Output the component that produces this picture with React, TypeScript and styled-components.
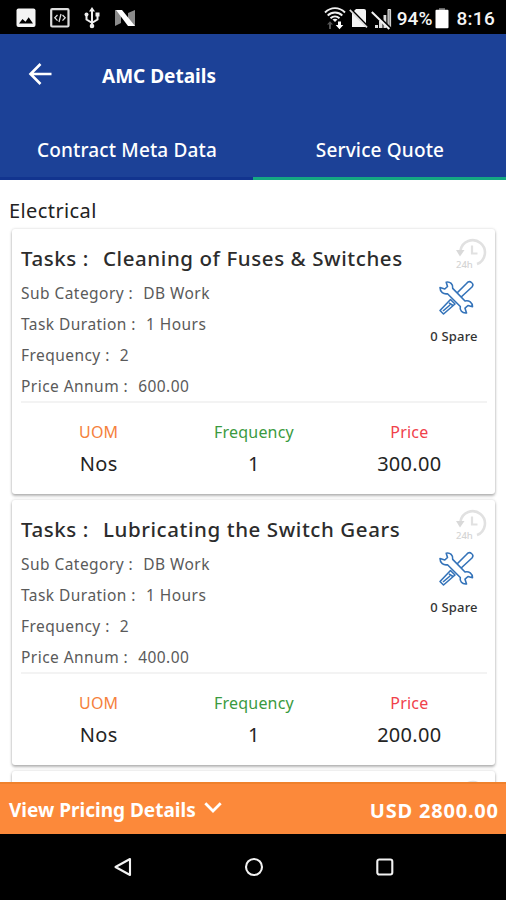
import React from 'react';
import styled, { createGlobalStyle } from 'styled-components';

const Global = createGlobalStyle`
  * { box-sizing: border-box; }
  body { margin: 0; background: #fff; font-family: "Noto Sans", "Open Sans", sans-serif; }
  svg { display: block; flex: none; }
`;

const Screen = styled.div`
  display: flex;
  flex-direction: column;
  width: 506px;
  height: 900px;
  overflow: hidden;
  background: #fff;
`;

const StatusBar = styled.div`
  display: flex;
  align-items: center;
  justify-content: space-between;
  flex: none;
  height: 34px;
  padding: 2px 11px 0 16px;
  background: #000;
  color: #f4f4f4;
`;

const StatusGroup = styled.div<{ $gap: number }>`
  display: flex;
  align-items: center;
  gap: ${(p) => p.$gap}px;
`;

const StatusText = styled.span<{ $spacing: number; $push: number }>`
  font: 500 19px/24px Roboto, sans-serif;
  letter-spacing: ${(p) => p.$spacing}px;
  margin: 2px 0 0 ${(p) => p.$push}px;
`;

const Header = styled.header`
  flex: none;
  height: 146px;
  background: #1c4197;
  color: #fff;
`;

const TitleBar = styled.div`
  display: flex;
  align-items: center;
  gap: 49px;
  height: 84px;
  padding: 0 0 4px 27px;
`;

const Title = styled.h1`
  margin: 4px 0 0;
  font-size: 19px;
  line-height: 26px;
  font-weight: 700;
`;

const Tabs = styled.nav`
  display: grid;
  grid-template-columns: 1fr 1fr;
  height: 62px;
`;

const Tab = styled.div<{ $active?: boolean }>`
  display: flex;
  align-items: center;
  justify-content: center;
  font-size: 19px;
  font-weight: 500;
  letter-spacing: 0.15px;
  border-bottom: 3px solid ${(p) => (p.$active ? '#14a882' : '#12348f')};
  padding: 4px 0 0 1px;
`;

const Content = styled.main`
  flex: 1;
  min-height: 0;
  overflow: hidden;
  padding: 17px 11px 0 12px;
`;

const Section = styled.h2`
  margin: 0 0 5px -3px;
  font-size: 20px;
  line-height: 27px;
  font-weight: 400;
  letter-spacing: 0.4px;
  color: #222;
`;

const Card = styled.article`
  display: flex;
  flex-direction: column;
  height: 265px;
  margin-bottom: 6px;
  padding: 13px 8px 0 9px;
  border-radius: 3px;
  background: #fff;
  box-shadow: 0 2px 3px rgba(0, 0, 0, 0.27), 0 0 3px rgba(0, 0, 0, 0.16);
`;

const CardTop = styled.div`
  display: flex;
  justify-content: space-between;
  height: 161px;
  border-bottom: 2px solid #f3f3f3;
`;

const Details = styled.div`
  display: flex;
  flex-direction: column;
`;

const TaskName = styled.h3`
  display: flex;
  gap: 14px;
  margin: 0 0 4px;
  font-size: 20.5px;
  line-height: 32px;
  font-weight: 500;
  letter-spacing: 0.58px;
  color: #2c2c2c;
  white-space: nowrap;
`;

const Detail = styled.div`
  display: flex;
  gap: 10px;
  font-size: 15.5px;
  line-height: 31px;
  letter-spacing: 0.45px;
  color: #5a5a5a;
  white-space: nowrap;
`;

const Side = styled.div`
  display: flex;
  flex-direction: column;
  align-items: center;
  width: 66px;
  margin-top: -4px;
`;

const HistorySlot = styled.div`
  align-self: flex-end;
  margin-bottom: 10px;
`;

const ToolsSlot = styled.div`
  margin-left: 4px;
`;

const Spare = styled.span`
  margin-top: 11px;
  font-size: 13px;
  line-height: 18px;
  font-weight: 500;
  letter-spacing: 0.2px;
  color: #333;
  white-space: nowrap;
`;

const Figures = styled.div`
  display: grid;
  grid-template-columns: repeat(3, 1fr);
  padding-top: 14px;
  text-align: center;
`;

const FigureLabel = styled.div<{ $color: string }>`
  font-size: 16px;
  line-height: 30px;
  letter-spacing: 0.2px;
  color: ${(p) => p.$color};
`;

const FigureValue = styled.div`
  font-size: 20px;
  line-height: 34px;
  letter-spacing: 0.3px;
  color: #242424;
`;

const PricingBar = styled.footer`
  display: flex;
  align-items: center;
  justify-content: space-between;
  flex: none;
  height: 52px;
  padding: 2px 8px 0 9px;
  border-top: 2px solid #ef812c;
  background: #fc893a;
  color: #fff;
  font-weight: 700;
  font-size: 19px;
`;

const PricingToggle = styled.div`
  display: flex;
  align-items: center;
  gap: 8px;
`;

const ChevronSlot = styled.span`
  margin-top: -4px;
`;

const Total = styled.span`
  font-size: 20px;
  letter-spacing: 0.8px;
  margin-right: -0.8px;
`;

const NavBar = styled.div`
  display: flex;
  align-items: center;
  justify-content: center;
  gap: 111px;
  flex: none;
  height: 66px;
  padding-left: 1px;
  background: #000;
`;

const ImageIcon = () => (
  <svg width="20" height="20" viewBox="0 0 20 20">
    <rect x="0.5" y="0.5" width="19" height="18.5" rx="2" fill="#f4f4f4" />
    <path d="M3 15.5 6.5 11l3 2.7 3.2-4.5 4.3 6.3z" fill="#000" />
  </svg>
);

const CodeIcon = () => (
  <svg width="20" height="20" viewBox="0 0 20 20" fill="none" stroke="#ddd">
    <rect x="1.2" y="1.2" width="17.3" height="17.3" rx="1" strokeWidth="2.2" />
    <path d="M7.5 7 4.8 9.8l2.7 2.8M12.5 7l2.7 2.8-2.7 2.8M11 6l-2 8" strokeWidth="1.3" />
  </svg>
);

const UsbIcon = () => (
  <svg width="16" height="22" viewBox="0 0 16 22" fill="none" stroke="#eee" strokeWidth="2">
    <path d="M8 3v15M2.5 8v4.5L8 15.8l5.5-3.3V8" />
    <path d="M8 0 11 4.5H5z" fill="#eee" stroke="none" />
    <circle cx="8" cy="19" r="2.3" fill="#eee" stroke="none" />
    <circle cx="2.5" cy="7.5" r="2" fill="#eee" stroke="none" />
    <path d="M11.5 5.5h4v4h-4z" fill="#eee" stroke="none" />
  </svg>
);

const NIcon = () => (
  <svg width="22" height="18" viewBox="0 0 22 18">
    <path d="M1 1h6v13l-6 3zM14 4l7-3v16h-7z" fill="#8b8b8b" />
    <path d="M2 1h6l13 16h-7z" fill="#fff" />
  </svg>
);

const WifiIcon = () => (
  <svg width="22" height="24" viewBox="0 0 22 24" fill="none" stroke="#f0f0f0">
    <path d="M1 6.500C7 .7 15 .7 21 6.500M3.700 9.500c4.200-4 10.400-4 14.600 0M6.500 12.300c2.700-2.500 6.300-2.500 9 0" strokeWidth="1.900" />
    <path d="m8.500 13.500 2.500 2.500 2.500-2.500c-1.500-1-3.500-1-5 0z" fill="#f0f0f0" stroke="none" />
    <path d="M6 15.200 9 18.500H7V23H5v-4.500H3z" fill="#555" stroke="none" />
    <path d="M14 15.500v3.500h-2.300l3.800 4.200 3.800-4.200H17v-3.500z" fill="#fff" stroke="none" />
  </svg>
);

const NoSimIcon = () => (
  <svg width="19" height="21" viewBox="0 0 19 21">
    <path d="M7 1h8q2 0 2 2v16H3V5z" fill="#f4f4f4" />
    <path d="m1.500 1 17 17.500" stroke="#000" strokeWidth="2.400" />
    <path d="M.8 1.800 18 19.300" stroke="#ddd" strokeWidth="1.700" />
  </svg>
);

const NoSignalIcon = () => (
  <svg width="21" height="23" viewBox="0 0 21 23">
    <path d="M4 18h3v3H4zM8 14h3.500v7H8zM12.500 8h2.800v13h-2.800z" fill="#ddd" />
    <path d="M17 2.500h2.600v18H17z" fill="#999" stroke="#ddd" />
    <path d="m2.500 5 17 16.500" stroke="#000" strokeWidth="2.600" />
    <path d="m.8 5 17.500 17" stroke="#f4f4f4" strokeWidth="2" />
  </svg>
);

const BatteryIcon = () => (
  <svg width="14" height="21" viewBox="0 0 14 21">
    <path d="M4 0h6v2H4z" fill="#666" />
    <rect x="0.5" y="1.8" width="13" height="18.5" rx="1" fill="#fff" />
  </svg>
);

const BackArrow = () => (
  <svg width="26" height="24" viewBox="0 0 26 24" fill="none" stroke="#fff" strokeWidth="2.600">
    <path d="M24.500 12H3.500M13.500 2 3.500 12l10 10" />
  </svg>
);

const HistoryIcon = () => (
  <svg width="32" height="32" viewBox="0 0 32 32" fill="none" stroke="#e1e1e1">
    <path d="M5.500 12.500A12.300 12.300 0 1 1 22 26" strokeWidth="2.600" />
    <path d="M1 12h8.500L5 18.500z" fill="#d9d9d9" stroke="none" />
    <path d="M17 7.500V15.500H22.500" strokeWidth="2.200" />
    <text x="1" y="30" fill="#d4d4d4" stroke="none" fontSize="9.500" fontWeight="500" fontFamily="Noto Sans">24h</text>
  </svg>
);

const ToolsIcon = () => (
  <svg width="36" height="36" viewBox="0 0 36 36" fill="#fff" stroke="#3473b9" strokeWidth="1.600" strokeLinejoin="round">
    <path d="M28.500 3.500q2.500-3 5-1t.5 4.500L21 19l-4-4z" />
    <path d="m12.500 19.500 4.500 4.500L5.500 34 2 30.500z" />
    <path d="m11 23 4 2.500M5 31l7-6" />
    <path d="M2 7.500 6.800 9 9.500 6.500 8.200 2.200c4-.8 7 2 6.500 6.200L27 21c4-1 7.500 1.500 7.500 5.800L30 25.500l-3 2.700 1.500 4.800c-4.500.5-7-2.800-6.200-6.500L9.500 13.700C5.500 14.500 2 12 2 7.500z" />
  </svg>
);

const Chevron = () => (
  <svg width="18" height="12" viewBox="0 0 18 12" fill="none" stroke="#fff" strokeWidth="2.800">
    <path d="m1.300 1.300 7.700 7.700 7.700-7.700" />
  </svg>
);

const NavBack = () => (
  <svg width="20" height="20" viewBox="0 0 20 20" fill="none" stroke="#f2f2f2" strokeWidth="2.100" strokeLinejoin="round">
    <path d="M17 2v16L2.500 10z" />
  </svg>
);

const NavHome = () => (
  <svg width="20" height="20" viewBox="0 0 20 20" fill="none" stroke="#f2f2f2" strokeWidth="2.100">
    <circle cx="10" cy="10" r="8" />
  </svg>
);

const NavRecent = () => (
  <svg width="20" height="20" viewBox="0 0 20 20" fill="none" stroke="#f2f2f2" strokeWidth="2.100">
    <rect x="2.300" y="2.500" width="15" height="15" rx="2" />
  </svg>
);

interface Task {
  name: string;
  annum: string;
  price: string;
}

const tasks: Task[] = [
  { name: 'Cleaning of Fuses & Switches', annum: '600.00', price: '300.00' },
  { name: 'Lubricating the Switch Gears', annum: '400.00', price: '200.00' },
];

const TaskCard = ({ task }: { task: Task }) => (
  <Card>
    <CardTop>
      <Details>
        <TaskName><span>Tasks :</span><span>{task.name}</span></TaskName>
        <Detail><span>Sub Category :</span><span>DB Work</span></Detail>
        <Detail><span>Task Duration :</span><span>1 Hours</span></Detail>
        <Detail><span>Frequency :</span><span>2</span></Detail>
        <Detail><span>Price Annum :</span><span>{task.annum}</span></Detail>
      </Details>
      <Side>
        <HistorySlot><HistoryIcon /></HistorySlot>
        <ToolsSlot><ToolsIcon /></ToolsSlot>
        <Spare>0 Spare</Spare>
      </Side>
    </CardTop>
    <Figures>
      <FigureLabel $color="#f5813c">UOM</FigureLabel>
      <FigureLabel $color="#3a9a40">Frequency</FigureLabel>
      <FigureLabel $color="#f0414a">Price</FigureLabel>
      <FigureValue>Nos</FigureValue>
      <FigureValue>1</FigureValue>
      <FigureValue>{task.price}</FigureValue>
    </Figures>
  </Card>
);

export default function App() {
  return (
    <Screen>
      <Global />
      <StatusBar>
        <StatusGroup $gap={14}>
          <ImageIcon />
          <CodeIcon />
          <UsbIcon />
          <NIcon />
        </StatusGroup>
        <StatusGroup $gap={3}>
          <WifiIcon />
          <NoSimIcon />
          <NoSignalIcon />
          <StatusText $spacing={0} $push={2}>94%</StatusText>
          <BatteryIcon />
          <StatusText $spacing={0.3} $push={4}>8:16</StatusText>
        </StatusGroup>
      </StatusBar>
      <Header>
        <TitleBar>
          <BackArrow />
          <Title>AMC Details</Title>
        </TitleBar>
        <Tabs>
          <Tab>Contract Meta Data</Tab>
          <Tab $active>Service Quote</Tab>
        </Tabs>
      </Header>
      <Content>
        <Section>Electrical</Section>
        {tasks.map((task) => (
          <TaskCard key={task.name} task={task} />
        ))}
        <Card>
          <CardTop>
            <Details />
            <Side>
              <HistorySlot><HistoryIcon /></HistorySlot>
            </Side>
          </CardTop>
        </Card>
      </Content>
      <PricingBar>
        <PricingToggle>
          <span>View Pricing Details</span>
          <ChevronSlot><Chevron /></ChevronSlot>
        </PricingToggle>
        <Total>USD 2800.00</Total>
      </PricingBar>
      <NavBar>
        <NavBack />
        <NavHome />
        <NavRecent />
      </NavBar>
    </Screen>
  );
}
